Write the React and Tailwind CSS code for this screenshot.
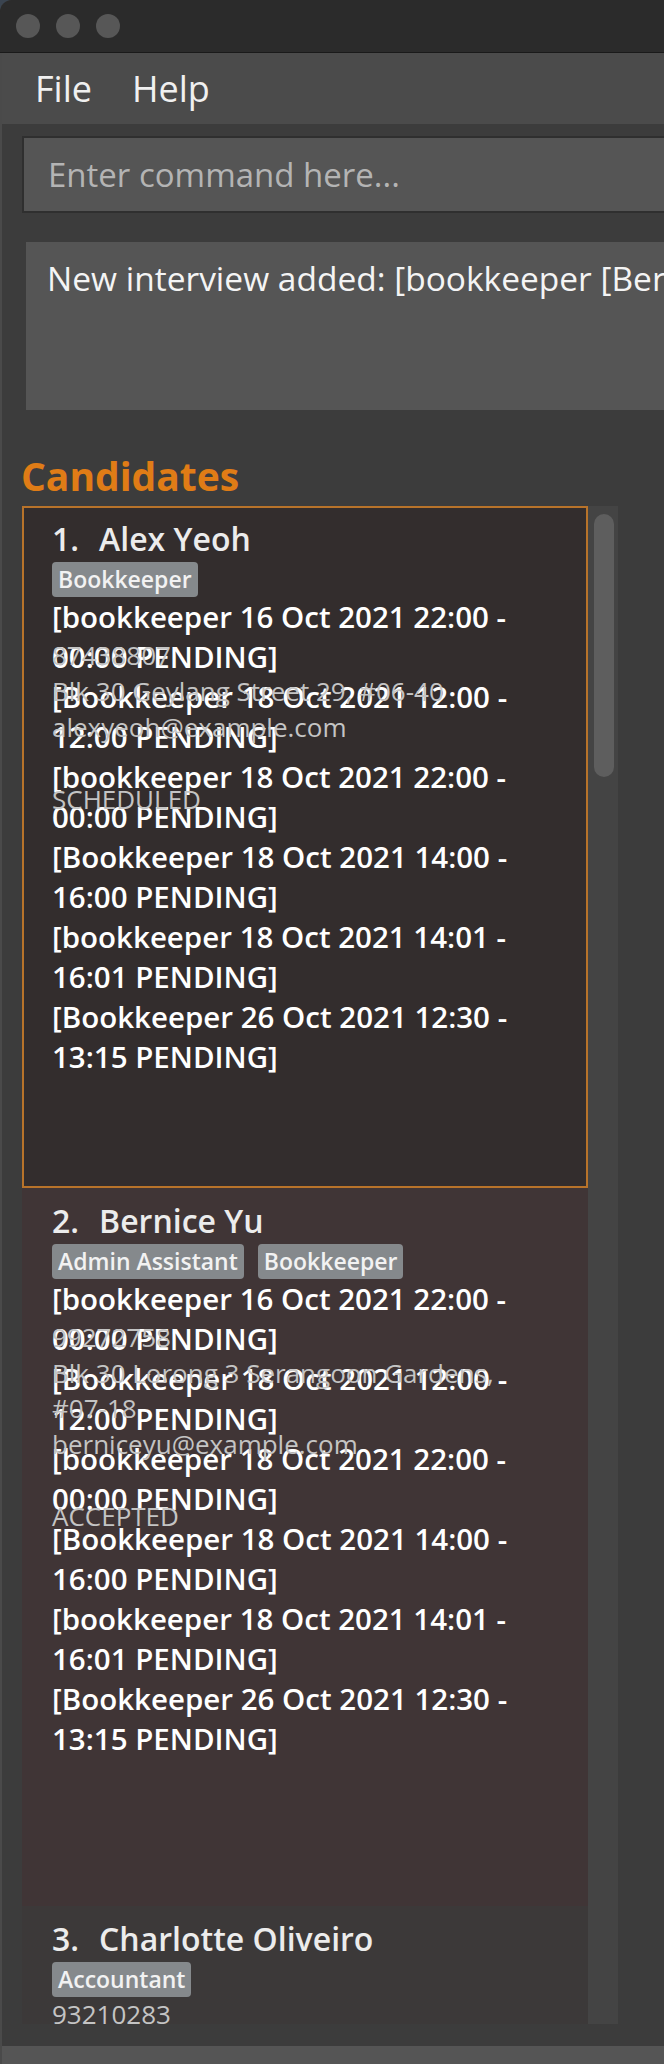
import React from 'react';

const interviews = [
  '[bookkeeper 16 Oct 2021 22:00 - 00:00 PENDING]',
  '[Bookkeeper 18 Oct 2021 12:00 - 12:00 PENDING]',
  '[bookkeeper 18 Oct 2021 22:00 - 00:00 PENDING]',
  '[Bookkeeper 18 Oct 2021 14:00 - 16:00 PENDING]',
  '[bookkeeper 18 Oct 2021 14:01 - 16:01 PENDING]',
  '[Bookkeeper 26 Oct 2021 12:30 - 13:15 PENDING]',
];

const candidates = [
  {
    id: 1,
    name: 'Alex Yeoh',
    tags: ['Bookkeeper'],
    phone: '87438807',
    address: 'Blk 30 Geylang Street 29, #06-40',
    email: 'alexyeoh@example.com',
    status: 'SCHEDULED',
    interviews,
    selected: true,
  },
  {
    id: 2,
    name: 'Bernice Yu',
    tags: ['Admin Assistant', 'Bookkeeper'],
    phone: '99272758',
    address: 'Blk 30 Lorong 3 Serangoon Gardens, #07-18',
    email: 'berniceyu@example.com',
    status: 'ACCEPTED',
    interviews,
    bg: 'bg-[#403536]',
  },
  {
    id: 3,
    name: 'Charlotte Oliveiro',
    tags: ['Accountant'],
    phone: '93210283',
    address: 'Blk 11 Ang Mo Kio Street 74, #11-04',
    email: 'charlotte@example.com',
    status: 'REJECTED',
    interviews: [],
    bg: 'bg-[#3c3939]',
  },
];

const CandidateCard = ({ c }) => {
  const cardClass = c.selected
    ? 'border-2 border-[#b8732a] bg-[#332d2d] pl-[28px] pt-[11px] pb-[369px]'
    : `${c.bg} pl-[30px] pt-[13px] pb-[372px]`;

  return (
    <div className={`${cardClass} shrink-0`}>
      <div className="flex items-baseline text-[32px] leading-[40px] font-semibold text-[#ececec]">
        <span>{c.id}.</span>
        <span className="ml-[20px]">{c.name}</span>
      </div>
      <div className="mt-[3px] flex gap-[14px]">
        {c.tags.map((tag) => (
          <span
            key={tag}
            className="h-[35px] px-[6px] rounded-[4px] bg-[#85898c] text-[23px] leading-[35px] font-semibold text-[#f2f2f2]"
          >
            {tag}
          </span>
        ))}
      </div>
      {c.interviews.length > 0 && (
        <div className="h-[40px] mb-[1px] w-[490px] text-[29.5px] leading-[40px] font-semibold text-white">
          {c.interviews.map((iv, index) => (
            <div key={index}>{iv}</div>
          ))}
        </div>
      )}
      <div className="w-[470px] flex flex-col gap-[1px] text-[26px] leading-[35px] text-[#c4c4c4]">
        <div>{c.phone}</div>
        <div>{c.address}</div>
        <div>{c.email}</div>
        <div className="h-[35px]"></div>
        <div>{c.status}</div>
      </div>
    </div>
  );
};

const App = () => {
  return (
    <div className="w-[664px] h-[2064px] bg-[#3a4450] overflow-hidden font-['Open_Sans',sans-serif]">
      <div className="h-full rounded-tl-[12px] overflow-hidden bg-[#3c3c3c] flex flex-col">
        <div className="h-[53px] shrink-0 bg-[#2b2b2b] border-b border-[#1a1a1a] flex items-center pl-[16px] gap-[16px]">
          <div className="w-[24px] h-[24px] rounded-full bg-[#575757]"></div>
          <div className="w-[24px] h-[24px] rounded-full bg-[#575757]"></div>
          <div className="w-[24px] h-[24px] rounded-full bg-[#575757]"></div>
        </div>

        <div className="flex-1 border-l-2 border-[#4a4a4a] flex flex-col">
          <div className="h-[71px] shrink-0 bg-[#4b4b4b] flex items-center pl-[33px] text-[36px] leading-[49px] text-[#f0f0f0]">
            <span>File</span>
            <span className="ml-[40px]">Help</span>
          </div>

          <div className="mt-[12px] ml-[20px] h-[77px] shrink-0 border-2 border-r-0 border-[#2f2f2f] bg-[#555555] flex items-center pl-[24px] text-[33px] text-[#b4b4b4] whitespace-nowrap overflow-hidden">
            Enter command here...
          </div>

          <div className="mt-[29px] ml-[24px] h-[168px] shrink-0 bg-[#555555] pl-[21px] pt-[12px] text-[33.5px] leading-[48px] text-[#f4f4f4] whitespace-nowrap overflow-hidden">
            New interview added: [bookkeeper [Bernice Yu] 16 Oct 2021 22:00 - 00:00 PENDING]
          </div>

          <div className="mt-[42px] ml-[19px] h-[48px] shrink-0 text-[39px] leading-[48px] font-bold text-[#e07c16]">
            Candidates
          </div>

          <div className="mt-[6px] ml-[20px] w-[596px] h-[1518px] shrink-0 flex overflow-hidden">
            <div className="w-[566px] flex flex-col">
              {candidates.map((c) => (
                <CandidateCard key={c.id} c={c} />
              ))}
            </div>
            <div className="w-[30px] bg-[#444444] pt-[8px] pl-[6px]">
              <div className="w-[20px] h-[263px] rounded-full bg-[#5e5e5e]"></div>
            </div>
          </div>

          <div className="mt-[22px] flex-1 bg-[#555555]"></div>
        </div>
      </div>
    </div>
  );
};

export default App;
